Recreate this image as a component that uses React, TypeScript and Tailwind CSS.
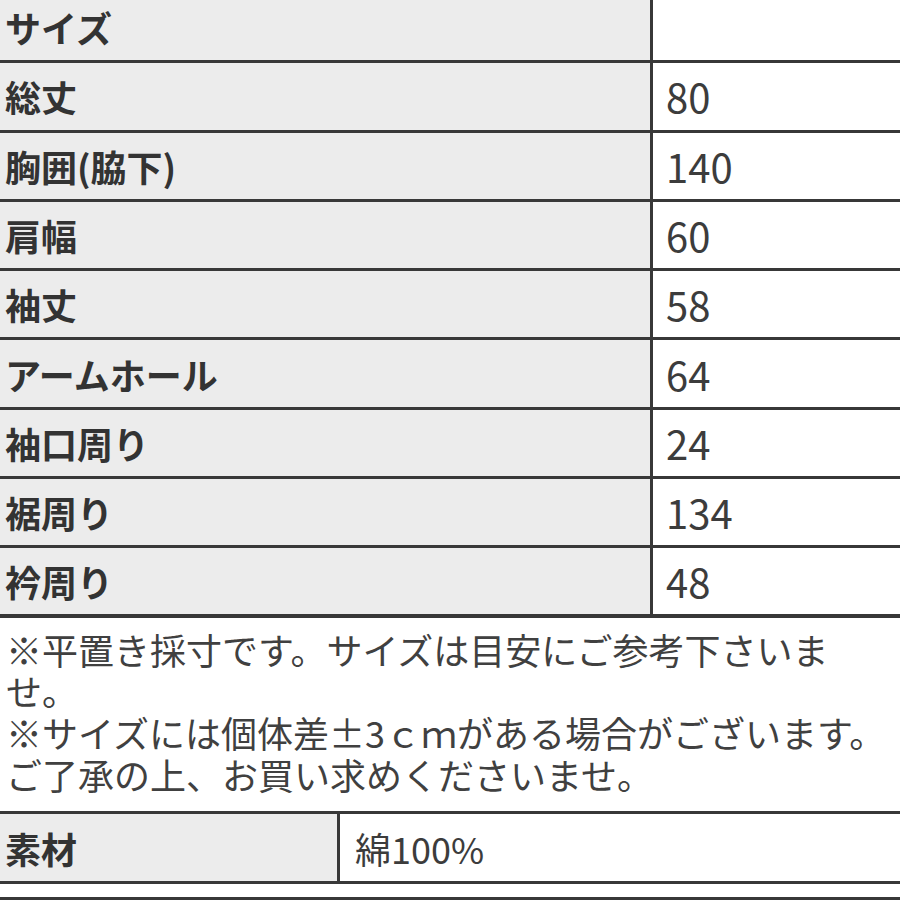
import React from 'react';

const rows: { label: string; value: string }[] = [
  { label: 'サイズ', value: '' },
  { label: '総丈', value: '80' },
  { label: '胸囲(脇下)', value: '140' },
  { label: '肩幅', value: '60' },
  { label: '袖丈', value: '58' },
  { label: 'アームホール', value: '64' },
  { label: '袖口周り', value: '24' },
  { label: '裾周り', value: '134' },
  { label: '衿周り', value: '48' },
];

const font = { fontFamily: '"Noto Sans CJK JP", "Noto Sans", sans-serif' };

const App: React.FC = () => {
  return (
    <div className="w-[900px] h-[900px] overflow-hidden bg-white" style={font}>
      {/* size table (top is cut off in the shot) */}
      <div className="-mt-[6px]">
        {rows.map((row, i) => (
          <div
            key={row.label}
            className={
              i === rows.length - 1
                ? 'flex h-[69.3px] border-b-4 border-[#383838]'
                : 'flex h-[69.3px] border-b-[3px] border-[#383838]'
            }
          >
            <div className="w-[650px] bg-[#ececec] flex items-center pl-[5px] text-[36px] font-bold text-[#333] leading-none">
              {row.label}
            </div>
            <div className="flex-1 border-l-[3px] border-[#383838] flex items-center pl-[13px] text-[40px] text-[#3c3c3c] leading-none">
              {row.value}
            </div>
          </div>
        ))}
      </div>

      <div className="px-[6px] pt-[11px] pb-[16px] text-[36px] leading-[41.7px] text-[#404040] whitespace-nowrap">
        ※平置き採寸です。サイズは目安にご参考下さいま
        <br />
        せ。
        <br />
        ※サイズには個体差±3ｃｍがある場合がございます。
        <br />
        ご了承の上、お買い求めくださいませ。
      </div>

      <div className="flex h-[73px] border-y-[3px] border-[#383838]">
        <div className="w-[337px] bg-[#ececec] flex items-center pl-[5px] text-[36px] font-bold text-[#333] leading-none">
          素材
        </div>
        <div className="flex-1 border-l-[3px] border-[#383838] flex items-center pl-[15px] text-[36px] text-[#3c3c3c] leading-none">
          綿100%
        </div>
      </div>
      <div className="mt-[13px] border-t-[3px] border-[#383838]" />
    </div>
  );
};

export default App;
